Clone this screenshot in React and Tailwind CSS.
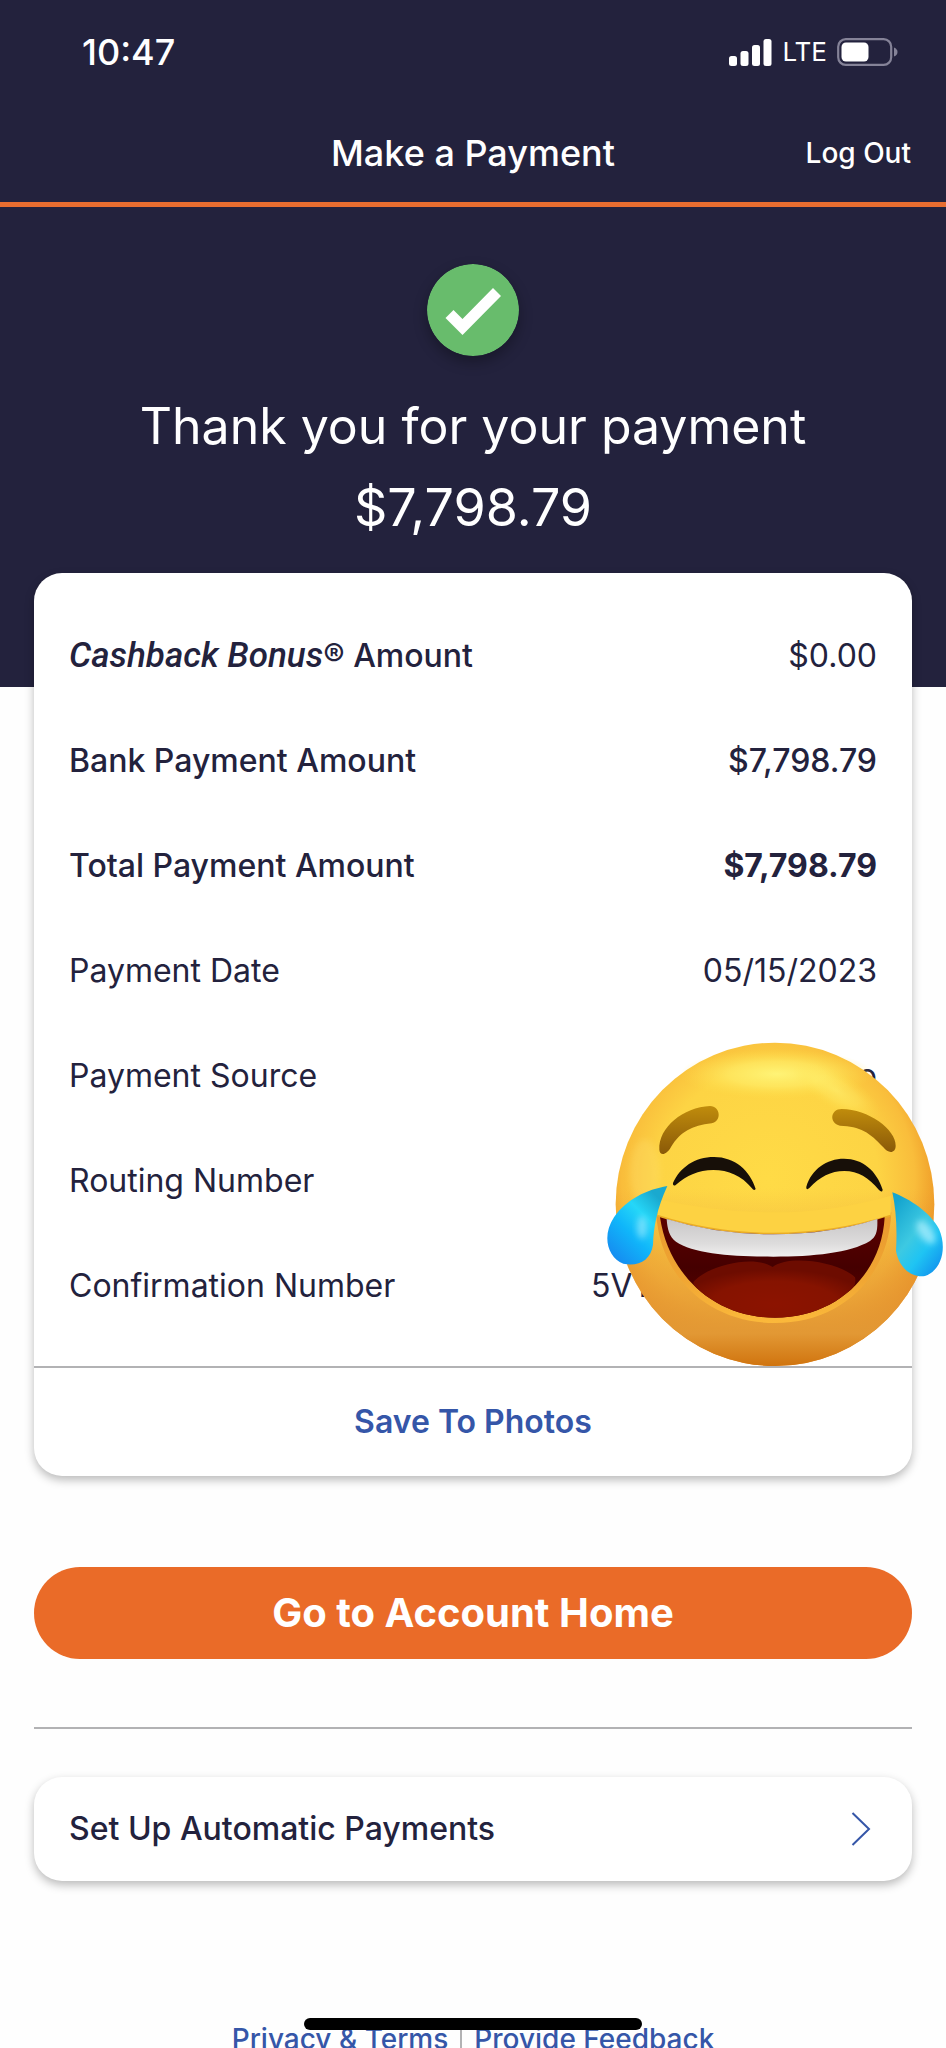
import React from "react";

const details = [
  { id: "cashback", label: <><em className="font-['Roboto',sans-serif] text-[35px]">Cashback Bonus</em>® Amount</>, value: "$0.00", labelClass: "font-medium", valueClass: "" },
  { id: "bank", label: "Bank Payment Amount", value: "$7,798.79", labelClass: "font-medium", valueClass: "font-medium" },
  { id: "total", label: "Total Payment Amount", value: "$7,798.79", labelClass: "font-medium", valueClass: "font-bold" },
  { id: "date", label: "Payment Date", value: "05/15/2023", labelClass: "", valueClass: "" },
  { id: "source", label: "Payment Source", value: "o", labelClass: "", valueClass: "" },
  { id: "routing", label: "Routing Number", value: "", labelClass: "", valueClass: "" },
  { id: "confirmation", label: "Confirmation Number", value: "5VT", labelClass: "", valueClass: "w-[286px] text-left" },
];

const StatusBar = () => (
  <div className="flex h-[104px] items-center justify-between pl-[82px] pr-12">
    <span className="text-[36px] leading-10 font-medium">10:47</span>
    <div className="flex items-center gap-[10px]">
      <svg className="h-[27px] w-[43px]" viewBox="0 0 43 27" fill="currentColor" aria-hidden="true">
        <rect x="0" y="17" width="8" height="10" rx="2.5" />
        <rect x="11.5" y="12" width="8" height="15" rx="2.5" />
        <rect x="23" y="6" width="8" height="21" rx="2.5" />
        <rect x="34.5" y="0" width="8" height="27" rx="2.5" />
      </svg>
      <span className="text-[26px] leading-8">LTE</span>
      <svg className="h-[28px] w-[61px]" viewBox="0 0 61 28" aria-hidden="true">
        <rect x="1.2" y="1.2" width="53" height="25.6" rx="7.5" fill="none" stroke="#858398" strokeWidth="2.2" />
        <rect x="4.5" y="4.5" width="27" height="19" rx="4.5" fill="#fff" />
        <path d="M57 9.500Q60.500 11 60.500 14T57 18.500Z" fill="#858398" />
      </svg>
    </div>
  </div>
);

const CheckBadge = () => (
  <svg className="h-[92px] w-[92px] rounded-full shadow-[0_6px_14px_rgba(0,0,0,0.3)]" viewBox="0 0 92 92" aria-hidden="true">
    <circle cx="46" cy="46" r="46" fill="#68bc6c" />
    <path d="M18.500 54L26.500 46L35.500 55L66 24L74 32L35.500 71Z" fill="#fff" />
  </svg>
);

const JoyFace = () => (
  <svg className="pointer-events-none absolute -right-8 bottom-0 h-[324px] w-[338px]" viewBox="138 129 1014 972" aria-hidden="true">
    <defs>
      <radialGradient id="face" gradientUnits="userSpaceOnUse" cx="625" cy="540" r="550">
        <stop offset="0" stopColor="#ffdb46" />
        <stop offset="0.6" stopColor="#fdd444" />
        <stop offset="0.8" stopColor="#f9bd3b" />
        <stop offset="1" stopColor="#e8861c" />
      </radialGradient>
      <linearGradient id="shade" x1="0" y1="0" x2="0" y2="1">
        <stop offset="0.45" stopColor="#e69a35" stopOpacity="0" />
        <stop offset="0.76" stopColor="#e69a35" stopOpacity="0.7" />
        <stop offset="0.9" stopColor="#e29834" />
        <stop offset="1" stopColor="#d0740f" />
      </linearGradient>
      <radialGradient id="shine">
        <stop offset="0" stopColor="#fff97f" stopOpacity="0.85" />
        <stop offset="0.5" stopColor="#fff06c" stopOpacity="0.6" />
        <stop offset="1" stopColor="#ffe04a" stopOpacity="0" />
      </radialGradient>
      <linearGradient id="brow" x1="0" y1="0" x2="0" y2="1">
        <stop offset="0" stopColor="#c08c0c" />
        <stop offset="1" stopColor="#8a5908" />
      </linearGradient>
      <linearGradient id="mouth" x1="0" y1="0" x2="0" y2="1">
        <stop offset="0" stopColor="#5c0000" />
        <stop offset="0.5" stopColor="#450000" />
        <stop offset="1" stopColor="#5e0200" />
      </linearGradient>
      <radialGradient id="tongue" cx="0.5" cy="0.75" r="0.6">
        <stop offset="0" stopColor="#8c1300" />
        <stop offset="0.65" stopColor="#861300" />
        <stop offset="1" stopColor="#6d0c00" />
      </radialGradient>
      <linearGradient id="teeth" x1="0" y1="0" x2="0" y2="1">
        <stop offset="0" stopColor="#c9c7c8" />
        <stop offset="0.65" stopColor="#dddcdc" />
        <stop offset="1" stopColor="#f1f0f0" />
      </linearGradient>
      <linearGradient id="rim" x1="0" y1="0" x2="0" y2="1">
        <stop offset="0" stopColor="#e9992e" />
        <stop offset="0.6" stopColor="#f0a633" />
        <stop offset="1" stopColor="#fbb93b" />
      </linearGradient>
      <linearGradient id="tearLeft" x1="0.2" y1="1" x2="0.85" y2="0.15">
        <stop offset="0" stopColor="#168bf0" />
        <stop offset="0.4" stopColor="#10b6fa" />
        <stop offset="0.7" stopColor="#25d7f8" />
        <stop offset="1" stopColor="#1aa9cf" />
      </linearGradient>
      <linearGradient id="tearRight" x1="0.1" y1="0.1" x2="0.8" y2="1">
        <stop offset="0" stopColor="#15a5cf" />
        <stop offset="0.45" stopColor="#3dc9e2" />
        <stop offset="0.7" stopColor="#1fc4f3" />
        <stop offset="1" stopColor="#1295ee" />
      </linearGradient>
      <filter id="soft" x="-50%" y="-50%" width="200%" height="200%">
        <feGaussianBlur stdDeviation="10" />
      </filter>
      <clipPath id="mouthClip">
        <path d="M300 655Q460 706 640 706T974 655C965 825 830 956 645 956C460 956 325 825 300 655Z" />
      </clipPath>
    </defs>
    <ellipse cx="645" cy="616" rx="478" ry="485" fill="url(#face)" />
    <ellipse cx="645" cy="616" rx="478" ry="485" fill="url(#shade)" />
    <ellipse cx="650" cy="225" rx="290" ry="75" fill="url(#shine)" />
    <ellipse cx="830" cy="275" rx="150" ry="55" fill="url(#shine)" opacity="0.55" transform="rotate(30 830 275)" />
    <ellipse cx="255" cy="520" rx="45" ry="100" fill="#ffe273" opacity="0.3" filter="url(#soft)" />
    <path d="M288 640Q460 690 640 690T994 640C985 840 840 972 645 972C450 972 300 840 288 640Z" fill="url(#rim)" />
    <path d="M292 600Q460 640 640 640T992 590V650Q830 706 640 706T292 650Z" fill="#fdd242" />
    <path d="M292 650Q460 704 640 704T992 650" fill="none" stroke="#eaac25" strokeWidth="5" />
    <path d="M300 655Q460 706 640 706T974 655C965 825 830 956 645 956C460 956 325 825 300 655Z" fill="url(#mouth)" />
    <g clipPath="url(#mouthClip)">
      <path d="M400 850C440 800 580 765 638 804C690 765 840 790 885 835C900 900 760 958 645 958C520 958 400 900 400 850Z" fill="url(#tongue)" />
    </g>
    <path d="M320 660Q470 706 640 706T952 660C953 695 950 712 930 726C870 762 760 773 640 773C520 773 400 764 348 728C328 714 322 690 320 660Z" fill="url(#teeth)" />
    <path d="M298 452C295 385 370 325 450 321C482 322 486 367 455 373C395 380 362 398 333 444C318 471 299 470 298 452Z" fill="url(#brow)" />
    <path d="M1007 440C1008 392 925 330 845 330C810 330 807 373 840 380C900 382 930 400 970 445C985 465 1007 463 1007 440Z" fill="url(#brow)" />
    <path d="M339 552C360 505 405 474 462 474C525 474 570 515 587 570C583 575 580 573 576 568C545 530 505 513 460 513C415 513 380 530 348 557C342 562 338 559 339 552Z" fill="#170f08" />
    <path d="M739 563C755 510 800 479 852 479C908 479 950 515 968 572C967 580 962 578 957 573C925 535 895 516 853 516C812 516 780 533 748 567C742 573 738 571 739 563Z" fill="#170f08" />
    <path d="M322 561C260 572 200 600 162 655C125 710 142 775 190 794C235 803 272 785 279 737C281 685 290 630 322 561Z" fill="url(#tearLeft)" />
    <ellipse cx="246" cy="685" rx="15" ry="34" fill="#a5ecff" opacity="0.6" filter="url(#soft)" />
    <path d="M997 580C1050 600 1110 640 1137 690C1163 750 1143 815 1095 831C1050 838 1015 800 1008 755C1012 690 1008 630 997 580Z" fill="url(#tearRight)" />
    <ellipse cx="1098" cy="700" rx="20" ry="40" fill="#b5f2ff" opacity="0.7" filter="url(#soft)" transform="rotate(-35 1098 700)" />
  </svg>
);

const PaymentCard = () => (
  <section className="mx-[34px] -mt-[114px] rounded-[28px] bg-white shadow-[0_4px_10px_rgba(0,0,0,0.27)]">
    <div className="relative px-[35px] pt-[30px] pb-[28px]">
      <dl>
        {details.map((row) => (
          <div key={row.id} className="flex h-[105px] items-center justify-between">
            <dt className={row.labelClass}>{row.label}</dt>
            <dd className={row.valueClass}>{row.value}</dd>
          </div>
        ))}
      </dl>
      <JoyFace />
    </div>
    <button className="block h-[110px] w-full border-t-2 border-[#b2b2b4] font-semibold text-[#3556a8]">
      Save To Photos
    </button>
  </section>
);

export default function App() {
  return (
    <div className="relative flex h-screen flex-col overflow-hidden bg-[#fefefe] font-['Inter',sans-serif] text-[32px] leading-10 text-[#23223d]">
      <header className="shrink-0 border-b-[5px] border-[#e86d30] bg-[#23223d] text-white">
        <StatusBar />
        <div className="grid h-[98px] grid-cols-[1fr_auto_1fr] items-center px-[35px]">
          <h1 className="col-start-2 text-[36px] font-medium">Make a Payment</h1>
          <button className="justify-self-end text-[28px] font-medium">Log Out</button>
        </div>
      </header>
      <main className="flex-1 overflow-y-auto [scrollbar-width:none]">
        <div className="flex flex-col items-center bg-[#23223d] pt-[57px] pb-[138px] text-center text-white">
          <CheckBadge />
          <h2 className="mt-[29px] text-[50px] leading-[82px]">Thank you for your payment</h2>
          <p className="text-[52px] leading-[82px]">$7,798.79</p>
        </div>
        <PaymentCard />
        <div className="mx-[34px] mt-[91px]">
          <button className="h-[92px] w-full rounded-full bg-[#ea6b28] text-[40px] font-bold text-white">
            Go to Account Home
          </button>
          <hr className="mt-[68px] border-t-2 border-[#b2b2b4]" />
          <button className="mt-12 flex h-[104px] w-full items-center justify-between rounded-[28px] bg-white px-[35px] font-medium shadow-[0_4px_10px_rgba(0,0,0,0.27)]">
            Set Up Automatic Payments
            <svg className="mr-[6px] h-[34px] w-[20px]" viewBox="0 0 20 34" fill="none" stroke="#3556a8" strokeWidth="2" aria-hidden="true">
              <path d="M1.500 1L18 17L1.500 33" />
            </svg>
          </button>
        </div>
        <footer className="mt-[138px] flex justify-center text-[28px] font-medium text-[#3556a8]">
          <a href="#privacy" className="border-r-2 border-[#b2b2b4] pr-3">Privacy &amp; Terms</a>
          <a href="#feedback" className="pl-3">Provide Feedback</a>
        </footer>
      </main>
      <div className="absolute bottom-[18px] left-1/2 h-3 w-[338px] -translate-x-1/2 rounded-full bg-black" />
    </div>
  );
}
